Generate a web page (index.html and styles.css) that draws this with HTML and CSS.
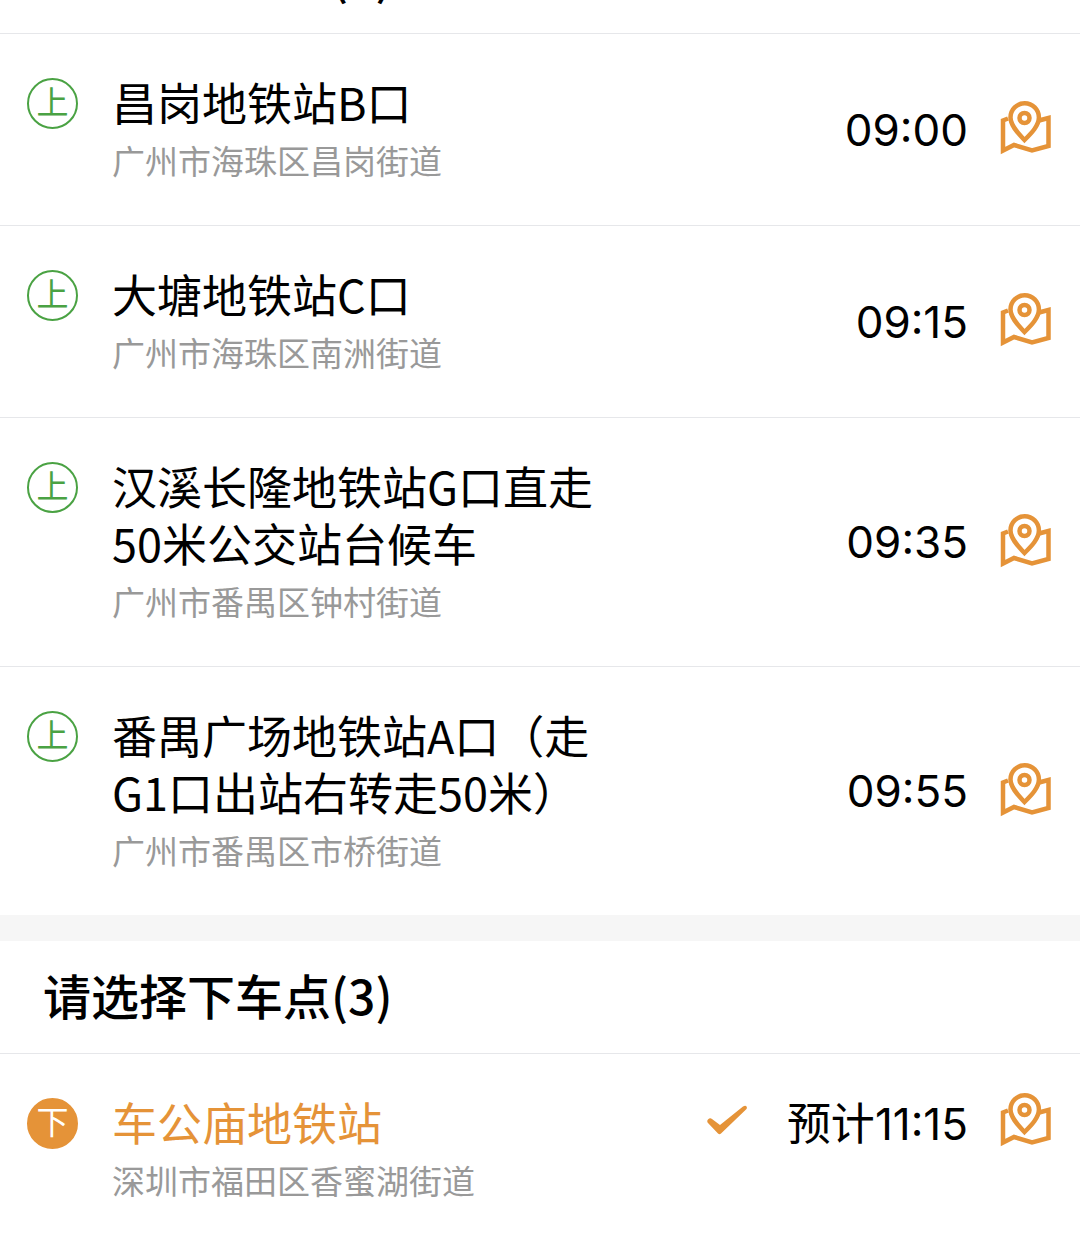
FILE: index.html
```html
<!DOCTYPE html>
<html lang="zh-CN">
<head>
    <meta charset="UTF-8">
    <meta name="viewport" content="width=device-width, initial-scale=1.0">
    <title>选择上下车点</title>
    <link rel="stylesheet" href="styles.css">
</head>
<body>
    <!-- shared icons -->
    <svg class="sprite" aria-hidden="true">
        <symbol id="icon-map" viewBox="0 0 52 54">
            <path d="M8 17.500 L3 19.500 V49.500 L14 44 L32 49.500 L48.500 45 V17 L39 19.500" fill="none" stroke="currentColor" stroke-width="4.500"/>
            <path d="M24.500 39 C19 33 10.500 25 10.500 16.500 a14.200 14.200 0 0 1 28.400 0 C38.900 25 30.500 33 24.500 39 Z" fill="none" stroke="currentColor" stroke-width="4.500"/>
            <circle cx="24.500" cy="17" r="5" fill="none" stroke="currentColor" stroke-width="4.500"/>
        </symbol>
        <symbol id="icon-check" viewBox="0 0 40 30">
            <path d="M1 14.500 Q3 12.500 5 14 L13 20 L36 1.500 Q38.500 0 39.500 1.500 Q40.500 3 39 4.500 L14 28.500 Q12.500 30 11 28.500 L1 18 Q-0.500 16.200 1 14.500 Z" fill="currentColor"/>
        </symbol>
    </svg>

    <main class="page">
        <section class="section">
            <h2 class="section-title">请选择上车点(4)</h2>
            <ul class="stops">
                <li class="stop">
                    <button type="button" class="stop-main">
                        <span class="badge badge-on">上</span>
                        <span class="stop-info">
                            <span class="stop-name">昌岗地铁站B口</span>
                            <span class="stop-address">广州市海珠区昌岗街道</span>
                        </span>
                    </button>
                    <time class="stop-time">09:00</time>
                    <button type="button" class="map-btn" aria-label="查看地图"><svg><use href="#icon-map"/></svg></button>
                </li>
                <li class="stop">
                    <button type="button" class="stop-main">
                        <span class="badge badge-on">上</span>
                        <span class="stop-info">
                            <span class="stop-name">大塘地铁站C口</span>
                            <span class="stop-address">广州市海珠区南洲街道</span>
                        </span>
                    </button>
                    <time class="stop-time">09:15</time>
                    <button type="button" class="map-btn" aria-label="查看地图"><svg><use href="#icon-map"/></svg></button>
                </li>
                <li class="stop">
                    <button type="button" class="stop-main">
                        <span class="badge badge-on">上</span>
                        <span class="stop-info">
                            <span class="stop-name">汉溪长隆地铁站G口直走50米公交站台候车</span>
                            <span class="stop-address">广州市番禺区钟村街道</span>
                        </span>
                    </button>
                    <time class="stop-time">09:35</time>
                    <button type="button" class="map-btn" aria-label="查看地图"><svg><use href="#icon-map"/></svg></button>
                </li>
                <li class="stop">
                    <button type="button" class="stop-main">
                        <span class="badge badge-on">上</span>
                        <span class="stop-info">
                            <span class="stop-name">番禺广场地铁站A口（走G1口出站右转走50米）</span>
                            <span class="stop-address">广州市番禺区市桥街道</span>
                        </span>
                    </button>
                    <time class="stop-time">09:55</time>
                    <button type="button" class="map-btn" aria-label="查看地图"><svg><use href="#icon-map"/></svg></button>
                </li>
            </ul>
        </section>

        <section class="section">
            <h2 class="section-title">请选择下车点(3)</h2>
            <ul class="stops">
                <li class="stop selected">
                    <button type="button" class="stop-main" aria-pressed="true">
                        <span class="badge badge-off">下</span>
                        <span class="stop-info">
                            <span class="stop-name">车公庙地铁站</span>
                            <span class="stop-address">深圳市福田区香蜜湖街道</span>
                        </span>
                    </button>
                    <svg class="check" aria-hidden="true"><use href="#icon-check"/></svg>
                    <span class="stop-time">预计<time>11:15</time></span>
                    <button type="button" class="map-btn" aria-label="查看地图"><svg><use href="#icon-map"/></svg></button>
                </li>
            </ul>
        </section>
    </main>
</body>
</html>
```

FILE: styles.css
```css
* {
    margin: 0;
    padding: 0;
    box-sizing: border-box;
}

body {
    font-family: "Noto Sans CJK SC", sans-serif;
    background: #fff;
    color: #000;
    overflow-x: hidden;
}

button {
    border: none;
    background: none;
    font: inherit;
    color: inherit;
    cursor: pointer;
}

.sprite {
    display: none;
}

/* the list sits part-way scrolled under the top edge */
.page {
    margin-top: -79px;
}

.section + .section {
    border-top: 26px solid #f6f6f6;
}

.section-title {
    padding: 17px 43px 23px;
    font-size: 48px;
    font-weight: 500;
    line-height: 72px;
    border-bottom: 1px solid #e6e7ea;
}

.stops {
    list-style: none;
}

.stop {
    display: flex;
    align-items: center;
    padding: 39px 28px 42px 27px;
}

.stop + .stop {
    border-top: 1px solid #e6e7ea;
}

.stop-main {
    flex: 1;
    display: flex;
    align-items: flex-start;
    gap: 34px;
    text-align: left;
}

.badge {
    flex: none;
    width: 51px;
    height: 51px;
    margin-top: 5px;
    border: 2px solid #4aa243;
    border-radius: 50%;
    font-size: 32px;
    line-height: 40px;
    text-align: center;
}

.badge-on {
    color: #4aa243;
}

.badge-off {
    color: #fff;
    background: #e59338;
    border-color: #e59338;
}

.stop-info {
    max-width: 500px;
}

.stop-name {
    display: block;
    font-size: 45px;
    line-height: 57px;
}

.stop-address {
    display: block;
    margin-top: 7px;
    font-size: 33px;
    line-height: 46px;
    color: #999;
}

.stop-time {
    flex: none;
    padding-top: 3px;
    font-family: Inter, "Noto Sans CJK SC", sans-serif;
    font-size: 44px;
    line-height: 56px;
}

.map-btn {
    flex: none;
    width: 52px;
    height: 54px;
    margin-left: 32px;
    color: #e59338;
}

.map-btn svg {
    display: block;
    width: 100%;
    height: 100%;
}

.selected {
    align-items: flex-start;
}

.selected .stop-name {
    color: #e59338;
}

.check {
    flex: none;
    width: 40px;
    height: 30px;
    margin: 12px 40px 0 0;
    color: #e59338;
}
```
